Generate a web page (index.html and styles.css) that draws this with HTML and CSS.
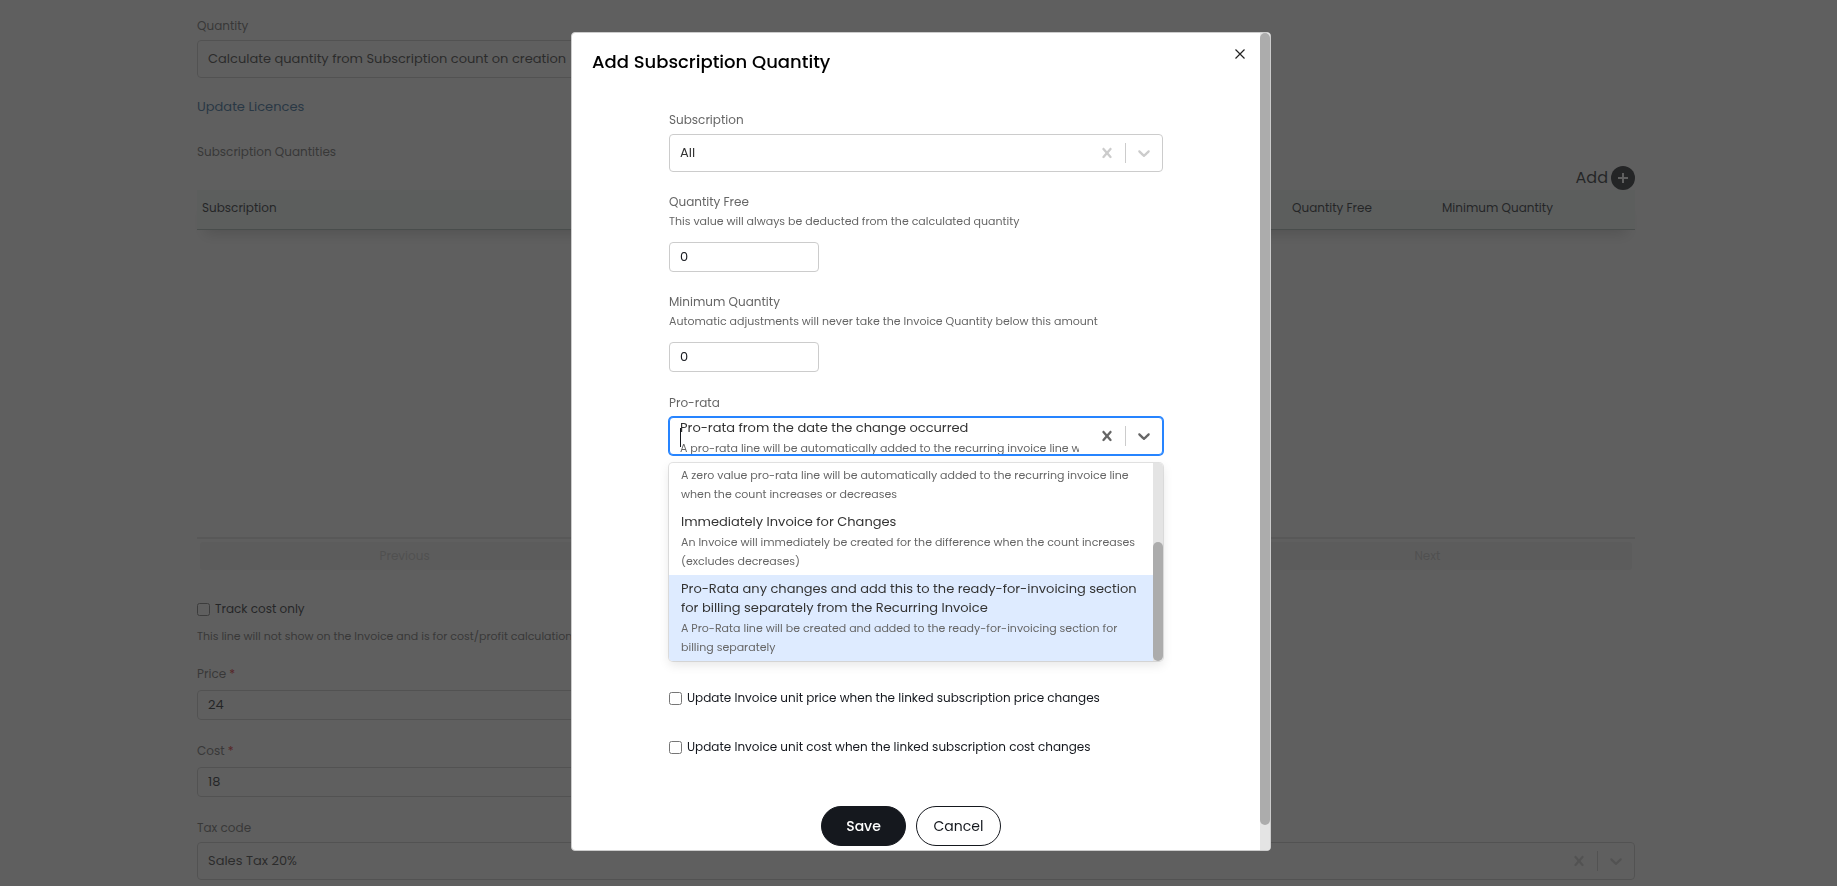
FILE: index.html
```html
<!DOCTYPE html>
<html lang="en">
<head>
  <meta charset="UTF-8">
  <meta name="viewport" content="width=device-width, initial-scale=1.0">
  <title>Add Subscription Quantity</title>
  <link rel="stylesheet" href="styles.css">
</head>
<body>
  <!-- shared icons -->
  <svg class="sprite" aria-hidden="true">
    <symbol id="icon-clear" viewBox="0 0 20 20">
      <path d="M14.348 14.849c-0.469 0.469-1.229 0.469-1.697 0l-2.651-3.030-2.651 3.029c-0.469 0.469-1.229 0.469-1.697 0-0.469-0.469-0.469-1.229 0-1.697l2.758-3.15-2.759-3.152c-0.469-0.469-0.469-1.228 0-1.697s1.228-0.469 1.697 0l2.652 3.031 2.651-3.031c0.469-0.469 1.228-0.469 1.697 0s0.469 1.229 0 1.697l-2.758 3.152 2.758 3.15c0.469 0.469 0.469 1.229 0 1.698z"/>
    </symbol>
    <symbol id="icon-down" viewBox="0 0 20 20">
      <path d="M4.516 7.548c0.436-0.446 1.043-0.481 1.576 0l3.908 3.747 3.908-3.747c0.533-0.481 1.141-0.446 1.574 0 0.436 0.445 0.408 1.197 0 1.615-0.406 0.418-4.695 4.502-4.695 4.502-0.217 0.223-0.502 0.335-0.787 0.335s-0.57-0.112-0.789-0.335c0 0-4.287-4.084-4.695-4.502s-0.436-1.17 0-1.615z"/>
    </symbol>
  </svg>

  <main class="page">
    <div class="field half">
      <label for="quantity">Quantity</label>
      <div class="select">
        <select id="quantity">
          <option>Calculate quantity from Subscription count on creation</option>
        </select>
        <button type="button" class="indicator" aria-label="Clear"><svg><use href="#icon-clear"/></svg></button>
        <span class="separator"></span>
        <span class="indicator"><svg><use href="#icon-down"/></svg></span>
      </div>
    </div>

    <a href="#" class="update-link">Update Licences</a>

    <p class="section-label">Subscription Quantities</p>
    <div class="add-row">
      <button type="button" class="add-button">
        Add
        <svg viewBox="0 0 24 24"><circle cx="12" cy="12" r="12"/><path d="M12 7v10M7 12h10"/></svg>
      </button>
    </div>
    <div class="grid">
      <table>
        <thead>
          <tr>
            <th>Subscription</th>
            <th class="col-number">Quantity Free</th>
            <th class="col-number">Minimum Quantity</th>
            <th class="col-actions"></th>
          </tr>
        </thead>
      </table>
    </div>
    <div class="pagination">
      <button type="button" disabled>Previous</button>
      <span class="pagination-center"></span>
      <button type="button" disabled>Next</button>
    </div>

    <label class="check"><input type="checkbox"> Track cost only</label>
    <p class="help track-help">This line will not show on the Invoice and is for cost/profit calculations</p>

    <div class="field half price-field">
      <label for="price">Price <span class="required">*</span></label>
      <input type="text" id="price" value="24">
    </div>
    <div class="field half price-field">
      <label for="cost">Cost <span class="required">*</span></label>
      <input type="text" id="cost" value="18">
    </div>
    <div class="field">
      <label for="tax">Tax code</label>
      <div class="select">
        <select id="tax">
          <option>Sales Tax 20%</option>
        </select>
        <button type="button" class="indicator" aria-label="Clear"><svg><use href="#icon-clear"/></svg></button>
        <span class="separator"></span>
        <span class="indicator"><svg><use href="#icon-down"/></svg></span>
      </div>
    </div>
  </main>

  <div class="overlay">
    <div class="modal" role="dialog" aria-labelledby="modal-title">
      <div class="modal-body">
        <div class="modal-header">
          <h1 id="modal-title">Add Subscription Quantity</h1>
          <button type="button" class="close" aria-label="Close">
            <svg viewBox="0 0 10 10"><path d="M0.5 0.5l9 9M9.5 0.5l-9 9"/></svg>
          </button>
        </div>

        <form class="modal-form">
          <div class="field">
            <label for="subscription">Subscription</label>
            <div class="select">
              <select id="subscription">
                <option>All</option>
              </select>
              <button type="button" class="indicator" aria-label="Clear"><svg><use href="#icon-clear"/></svg></button>
              <span class="separator"></span>
              <span class="indicator"><svg><use href="#icon-down"/></svg></span>
            </div>
          </div>

          <div class="field">
            <label for="free">Quantity Free</label>
            <p class="help">This value will always be deducted from the calculated quantity</p>
            <input type="text" id="free" class="short" value="0">
          </div>

          <div class="field">
            <label for="minimum">Minimum Quantity</label>
            <p class="help">Automatic adjustments will never take the Invoice Quantity below this amount</p>
            <input type="text" id="minimum" class="short" value="0">
          </div>

          <div class="field prorata">
            <label for="prorata">Pro-rata</label>
            <div class="select focused">
              <div class="select-value">
                <div class="option-title">Pro-rata from the date the change occurred</div>
                <div class="option-text">A pro-rata line will be automatically added to the recurring invoice line w</div>
                <input type="text" id="prorata" class="select-input" role="combobox" aria-expanded="true" aria-controls="prorata-list">
                <span class="caret"></span>
              </div>
              <button type="button" class="indicator" aria-label="Clear"><svg><use href="#icon-clear"/></svg></button>
              <span class="separator"></span>
              <span class="indicator"><svg><use href="#icon-down"/></svg></span>
            </div>
            <div class="menu">
              <div class="menu-list" id="prorata-list" role="listbox">
                <div class="option" role="option">
                  <div class="option-text">A zero value pro-rata line will be automatically added to the recurring invoice line when the count increases or decreases</div>
                </div>
                <div class="option" role="option">
                  <div class="option-title">Immediately Invoice for Changes</div>
                  <div class="option-text">An Invoice will immediately be created for the difference when the count increases (excludes decreases)</div>
                </div>
                <div class="option active" role="option">
                  <div class="option-title">Pro-Rata any changes and add this to the ready-for-invoicing section for billing separately from the Recurring Invoice</div>
                  <div class="option-text">A Pro-Rata line will be created and added to the ready-for-invoicing section for billing separately</div>
                </div>
              </div>
              <div class="scrollbar menu-scrollbar"><div class="thumb"></div></div>
            </div>
          </div>

          <div class="checks">
            <label class="check"><input type="checkbox"> Update Invoice unit price when the linked subscription price changes</label>
            <label class="check"><input type="checkbox"> Update Invoice unit cost when the linked subscription cost changes</label>
          </div>

          <div class="actions">
            <button type="submit" class="btn btn-primary">Save</button>
            <button type="button" class="btn">Cancel</button>
          </div>
        </form>
      </div>
      <div class="scrollbar modal-scrollbar"><div class="thumb"></div></div>
    </div>
  </div>
</body>
</html>
```

FILE: styles.css
```css
* {
  box-sizing: border-box;
}

body {
  margin: 0;
  background: #fff;
  color: #15181e;
  font-family: Poppins, Inter, sans-serif;
  font-size: 12px;
  line-height: 20px;
}

p {
  margin: 0;
}

button,
input,
select {
  font-family: inherit;
}

button {
  cursor: pointer;
}

.sprite {
  display: none;
}

/* page behind the dialog */
.page {
  padding: 15px 202px 6px 197px;
}

.half {
  width: 50%;
}

.update-link {
  display: block;
  margin-top: 19px;
  color: #2a6496;
  font-size: 13px;
  text-decoration: none;
}

.section-label {
  margin-top: 25px;
  color: #666;
}

.add-row {
  display: flex;
  justify-content: flex-end;
  margin-top: 4px;
}

.add-button {
  display: flex;
  align-items: center;
  gap: 3px;
  padding: 0;
  border: 0;
  background: none;
  color: #15181e;
  font-size: 16px;
  line-height: 24px;
}

.add-button svg {
  width: 24px;
  height: 24px;
  fill: #15181e;
  stroke: #fff;
  stroke-width: 2;
}

.add-button circle {
  stroke: none;
}

.grid {
  min-height: 347px;
}

.grid table {
  width: 100%;
  border-collapse: collapse;
  table-layout: fixed;
  box-shadow: 0 12px 14px -8px rgba(0, 0, 0, 0.2);
}

.grid th {
  height: 39px;
  padding: 0 5px 3px;
  background: #f1f9f6;
  border-bottom: 1px solid #a9b8b4;
  font-weight: 400;
  text-align: left;
}

.grid .col-number {
  width: 150px;
}

.grid .col-actions {
  width: 48px;
}

.pagination {
  display: flex;
  padding: 3px;
  border-top: 2px solid #e4e4e4;
}

.pagination button {
  flex: 1;
  height: 28px;
  padding: 0;
  border: 0;
  border-radius: 3px;
  background: #f3f3f3;
  color: #c4c4c4;
  font-size: 12px;
}

.pagination-center {
  flex: 1.5;
}

.page > .check {
  margin-top: 26px;
}

.track-help {
  margin: 7px 0 17px;
}

.price-field {
  margin-bottom: 20px;
}

.required {
  color: #e0141e;
}

/* form parts */
.field {
  position: relative;
}

.field > label {
  display: block;
  margin-bottom: 3px;
  color: #666;
  line-height: 22px;
}

.price-field > label {
  margin-bottom: 5px;
}

.help {
  color: #666;
  font-size: 11px;
}

.field input {
  display: block;
  width: 100%;
  height: 30px;
  padding: 0 10px;
  border: 1px solid #ccc;
  border-radius: 4px;
  color: #15181e;
  font-size: 13px;
}

.field .short {
  width: 150px;
}

.select {
  display: flex;
  align-items: center;
  height: 38px;
  border: 1px solid #ccc;
  border-radius: 4px;
  background: #fff;
}

.select select {
  flex: 1;
  min-width: 0;
  height: 36px;
  padding: 0 10px 2px;
  border: 0;
  background: none;
  color: #333;
  font-size: 13px;
  appearance: none;
}

.indicator {
  display: flex;
  padding: 8px;
  border: 0;
  background: none;
}

.indicator svg {
  width: 20px;
  height: 20px;
  fill: #ccc;
}

.separator {
  width: 1px;
  height: 20px;
  background: #ccc;
}

.focused {
  border-color: #2684ff;
  box-shadow: 0 0 0 1px #2684ff;
}

.focused .indicator svg {
  fill: #666;
}

.select-value {
  position: relative;
  display: flex;
  flex: 1;
  flex-direction: column;
  gap: 2px;
  min-width: 0;
  height: 36px;
  margin: 0 10px;
  overflow: hidden;
  white-space: nowrap;
}

.field .select-input {
  position: absolute;
  top: 0;
  left: 0;
  height: 36px;
  padding: 0;
  border: 0;
  background: none;
  outline: 0;
}

.caret {
  position: absolute;
  top: 10px;
  left: 0;
  width: 1px;
  height: 19px;
  background: #15181e;
}

.check {
  display: flex;
  align-items: center;
  gap: 5px;
}

.check input {
  width: 13px;
  height: 13px;
  margin: 0;
}

/* open drop-down */
.menu {
  position: absolute;
  top: 100%;
  left: 0;
  right: 0;
  z-index: 1;
  display: flex;
  height: 198px;
  margin-top: 8px;
  border-radius: 4px;
  background: #fff;
  box-shadow: 0 0 0 1px rgba(0, 0, 0, 0.1), 0 4px 11px rgba(0, 0, 0, 0.1);
  overflow: hidden;
}

.menu-list {
  display: flex;
  flex: 1;
  flex-direction: column;
  justify-content: flex-end;
}

.option {
  display: flex;
  flex-direction: column;
  gap: 2px;
  padding: 4px 12px;
}

.option.active {
  background: #deebff;
}

.option-title {
  color: #333;
  font-size: 13px;
  line-height: 19px;
}

.option-text {
  color: #666;
  font-size: 11px;
  line-height: 19px;
}

.scrollbar {
  flex: none;
  width: 10px;
  background: #e4e4e4;
}

.thumb {
  border-radius: 5px;
  background: #acacac;
}

.menu-scrollbar {
  display: flex;
  align-items: flex-end;
}

.menu-scrollbar .thumb {
  width: 10px;
  height: 60%;
}

.modal-scrollbar .thumb {
  height: 97%;
}

/* dialog */
.overlay {
  position: fixed;
  inset: 0;
  display: flex;
  align-items: flex-start;
  justify-content: center;
  padding: 32px 0 0 5px;
  background: rgba(41, 41, 41, 0.75);
}

.modal {
  display: flex;
  width: 700px;
  border: 1px solid #ccc;
  border-radius: 4px;
  background: #fff;
  overflow: hidden;
}

.modal-body {
  flex: 1;
  min-width: 0;
  padding: 16px 15px 4px 20px;
}

.modal-header {
  display: flex;
  align-items: flex-start;
  justify-content: space-between;
}

.modal-header h1 {
  margin: 0;
  color: #000;
  font-size: 18px;
  font-weight: 500;
  line-height: 26px;
}

.close {
  display: flex;
  padding: 0;
  border: 0;
  background: none;
}

.close svg {
  width: 10px;
  height: 10px;
  stroke: #222;
  stroke-width: 1.2;
}

.modal-form {
  display: flex;
  flex-direction: column;
  gap: 20px;
  margin: 34px 82px 0 77px;
}

.modal-form .help {
  margin-bottom: 12px;
  line-height: 18px;
}

.modal-form .field > label:has(+ .help) {
  margin-bottom: 0;
  line-height: 20px;
}

.checks {
  display: flex;
  flex-direction: column;
  gap: 29px;
  margin-top: 213px;
}

.actions {
  display: flex;
  justify-content: center;
  margin-top: 29px;
}

.btn {
  width: 85px;
  height: 40px;
  margin-right: 10px;
  padding: 0;
  border: 1px solid #15181e;
  border-radius: 20px;
  background: #fff;
  color: #15181e;
  font-size: 14px;
}

.btn-primary {
  background: #15181e;
  color: #fff;
  font-weight: 500;
}
```
